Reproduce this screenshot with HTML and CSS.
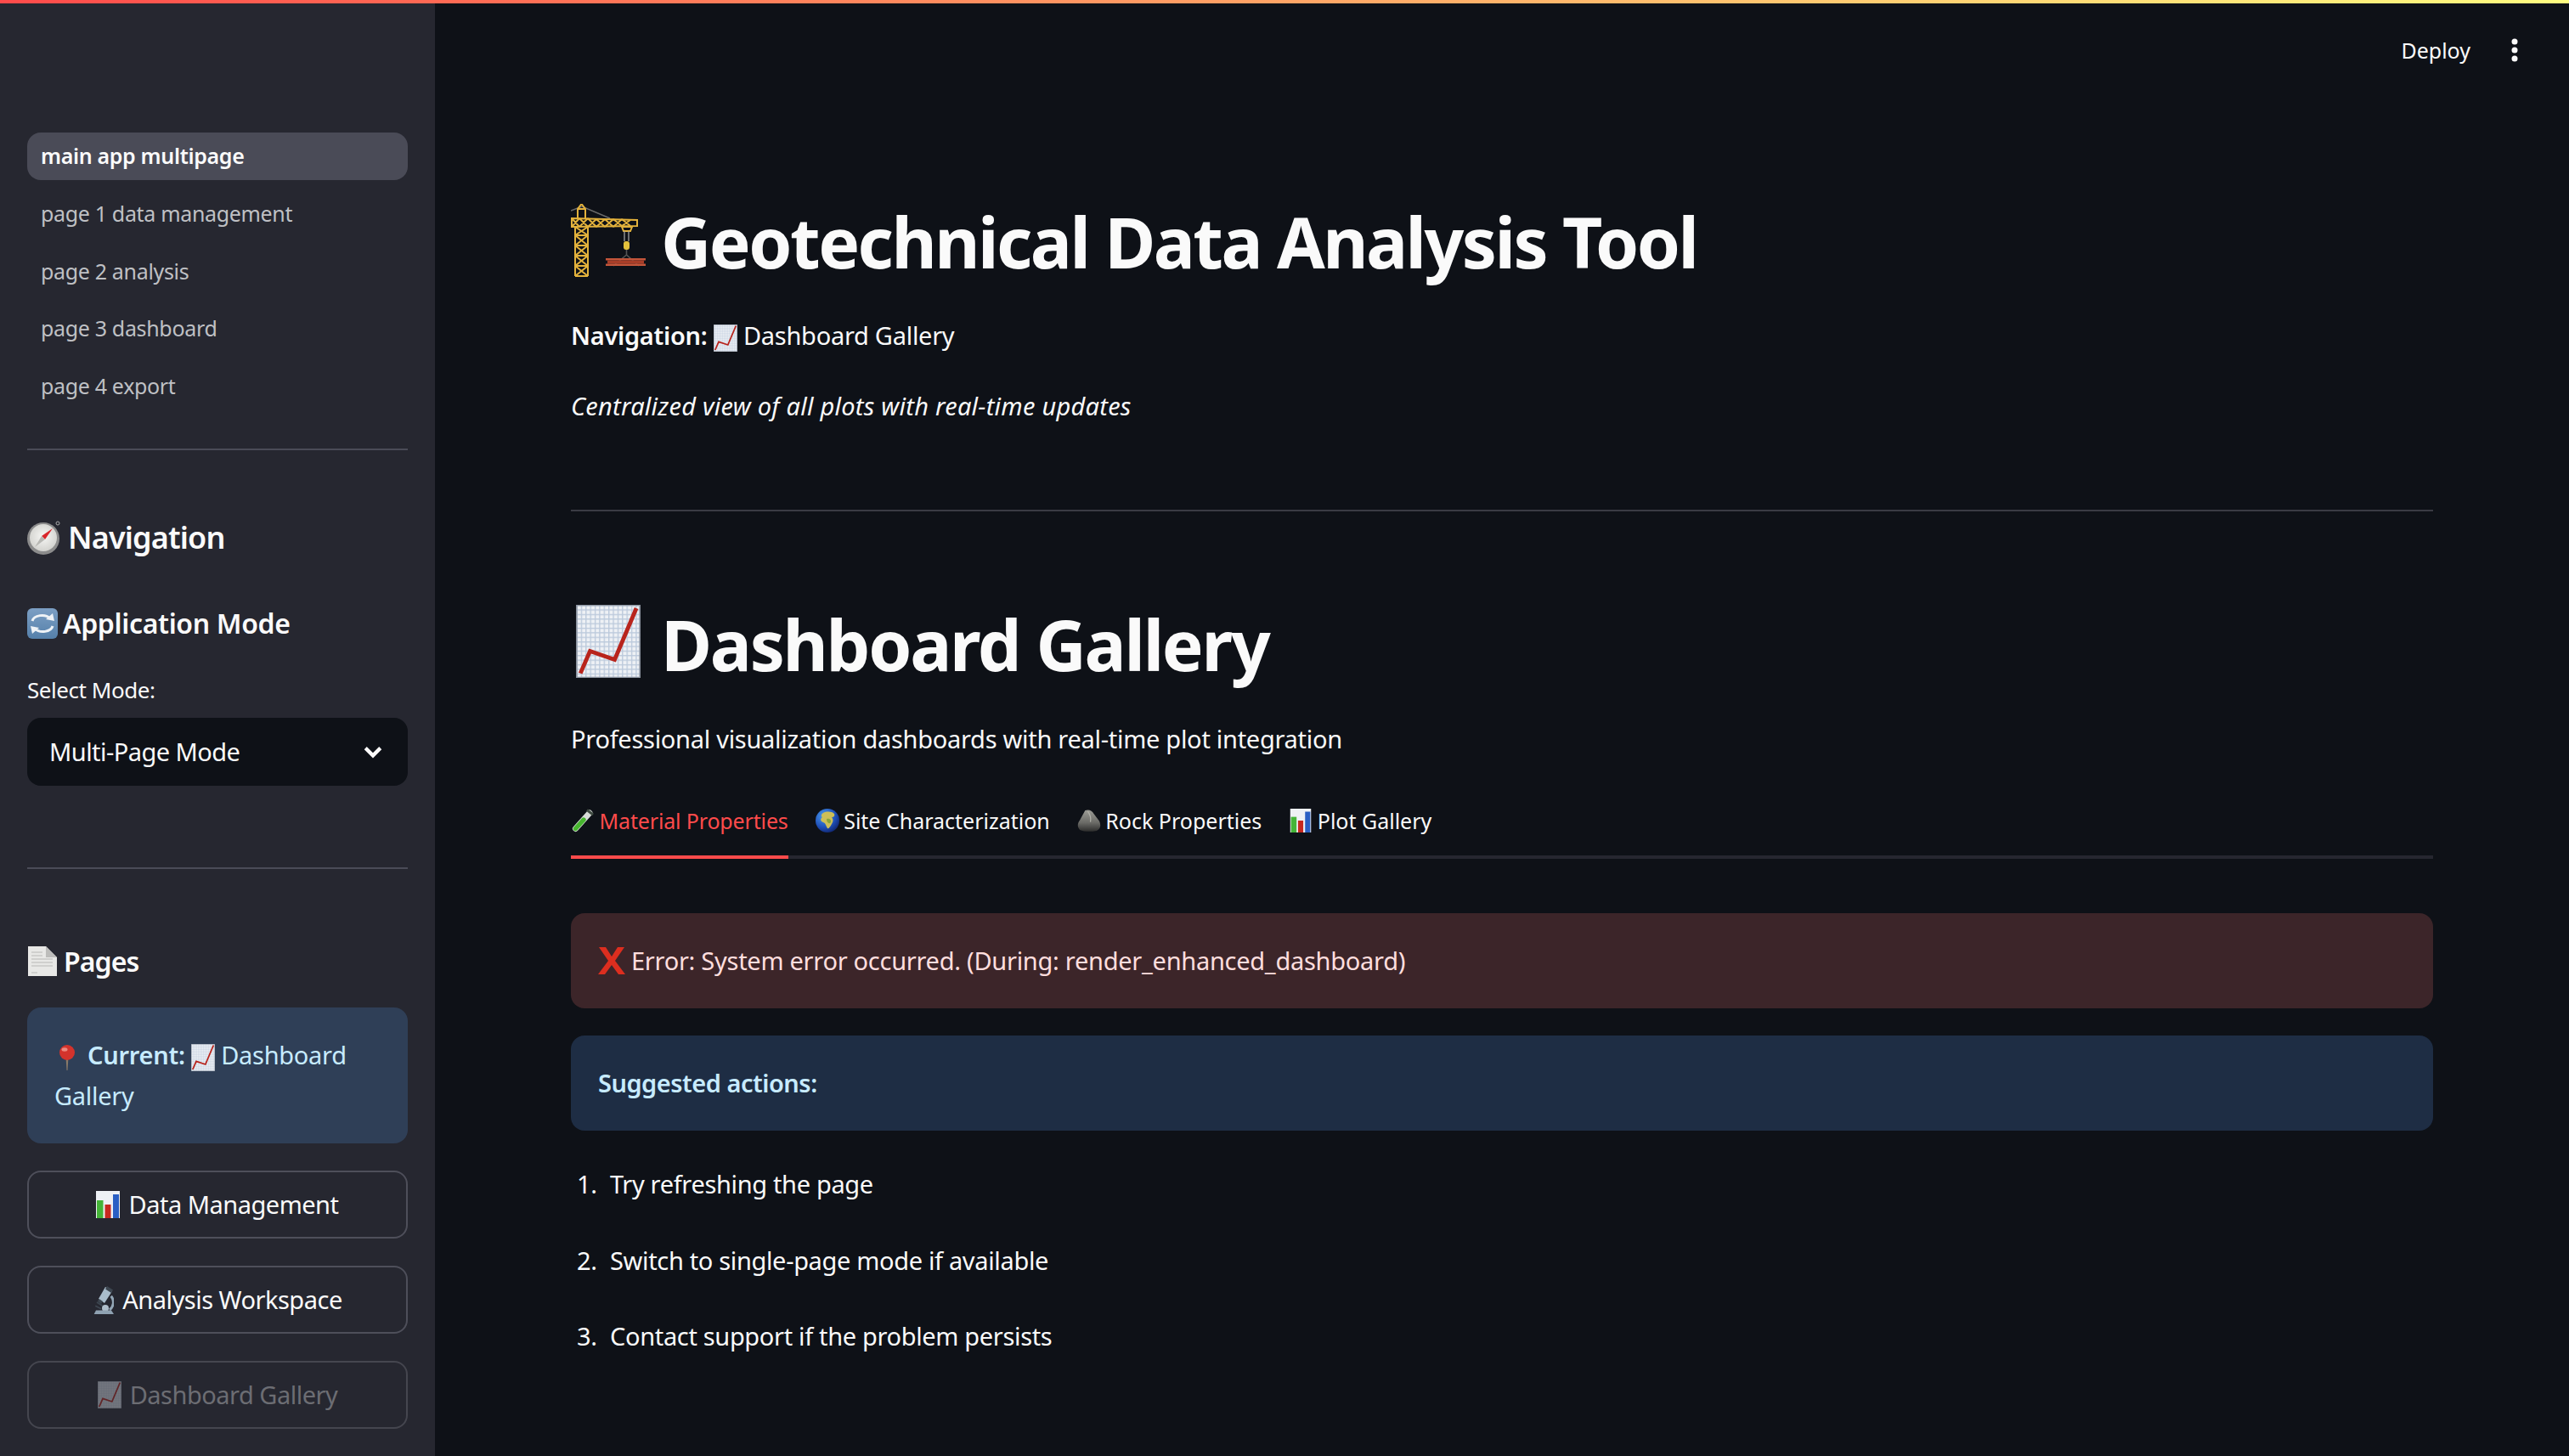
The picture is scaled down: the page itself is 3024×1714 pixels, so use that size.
FILE: index.html
```html
<!DOCTYPE html>
<html lang="en">
<head>
  <meta charset="UTF-8" />
  <meta name="viewport" content="width=device-width, initial-scale=1" />
  <title>Geotechnical Data Analysis Tool</title>
  <link rel="stylesheet" href="styles.css">
</head>
<body>

  <!-- emoji drawn once, reused below -->
  <svg class="icon-defs" aria-hidden="true">
    <defs>
      <pattern id="chartGrid" width="4" height="4" patternUnits="userSpaceOnUse">
        <rect width="4" height="4" fill="#eef1f5"/>
        <path d="M0 .5H4M.5 0V4" stroke="#bccadc" stroke-width="1"/>
      </pattern>
      <radialGradient id="globeSea" cx=".35" cy=".3" r=".8">
        <stop offset="0" stop-color="#4a9cf0"/>
        <stop offset=".6" stop-color="#1f50b8"/>
        <stop offset="1" stop-color="#0e1f66"/>
      </radialGradient>
      <linearGradient id="rockFill" x1="0" y1="0" x2="0" y2="1">
        <stop offset="0" stop-color="#9c9c96"/>
        <stop offset=".6" stop-color="#6a6a66"/>
        <stop offset="1" stop-color="#2d2d2c"/>
      </linearGradient>
      <radialGradient id="compassFace" cx=".5" cy=".45" r=".6">
        <stop offset="0" stop-color="#f7f7f5"/>
        <stop offset="1" stop-color="#cfcfcb"/>
      </radialGradient>
      <linearGradient id="arrowsBox" x1="0" y1="0" x2="0" y2="1">
        <stop offset="0" stop-color="#7c9fc4"/>
        <stop offset="1" stop-color="#5580aa"/>
      </linearGradient>
    </defs>

    <symbol id="e-chart" viewBox="0 0 56 64">
      <rect width="56" height="64" fill="url(#chartGrid)"/>
      <rect x=".5" y=".5" width="55" height="63" fill="none" stroke="#8f97a3"/>
      <path d="M3.6 60 L12 40.6 L33.6 48 L52.6 3" fill="none" stroke="#b8241c" stroke-width="3.6"/>
    </symbol>

    <symbol id="e-bars" viewBox="0 0 56 64">
      <rect width="56" height="64" fill="#eef1f5"/>
      <rect x="2" y="22" width="15" height="42" fill="#45b438"/>
      <rect x="21" y="32" width="14" height="32" fill="#c7281f"/>
      <rect x="40" y="8" width="14" height="56" fill="#2a5fc4"/>
    </symbol>

    <symbol id="e-crane" viewBox="0 0 88 86">
      <path d="M0 8 L13 3 L46 17" fill="none" stroke="#6a6a6a" stroke-width="1.6"/>
      <g fill="none" stroke="#e3b23c" stroke-width="2">
        <path d="M12.5 0 L8 6 V17 M12.5 0 L17 6 V17 M8 6 H17"/>
        <path d="M5 85 V27 M20 85 V27 M5 85 H20 M5 73 H20 M5 61 H20 M5 49 H20 M5 37 H20"/>
        <path d="M5 85 L20 73 M20 85 L5 73 M5 73 L20 61 M20 73 L5 61 M5 61 L20 49 M20 61 L5 49 M5 49 L20 37 M20 49 L5 37 M5 37 L20 27 M20 37 L5 27"/>
        <path d="M1 17 L78 19 V26 L1 27 Z"/>
        <path d="M1 17 L10 27 M10 17 L1 27 M10 17 L20 27 M20 17 L10 27 M20 17 L30 27 M30 18 L20 27 M30 18 L40 27 M40 18 L30 27 M40 18 L50 27 M50 18 L40 27 M50 18 L60 26 M60 18 L50 27 M60 18 L70 26 M70 19 L60 26"/>
        <path d="M60 27 H72 L70 32 H62 Z"/>
      </g>
      <path d="M63 32 V44 M68 32 V44" stroke="#a2a2a2" stroke-width="1.3"/>
      <rect x="62" y="44" width="7" height="10" rx="3" fill="#e3c13c"/>
      <path d="M65.5 54 V60 L50 73 M65.5 60 L80 73" fill="none" stroke="#555" stroke-width="1.6"/>
      <rect x="41" y="64" width="47" height="2.5" fill="#c4553a"/>
      <rect x="43" y="66.500" width="43" height="4" fill="#a83e28"/>
      <rect x="41" y="70.500" width="47" height="2.500" fill="#c4553a"/>
    </symbol>

    <symbol id="e-compass" viewBox="0 0 40 40">
      <circle cx="36" cy="3" r="2" fill="none" stroke="#a9a9a9" stroke-width="1"/>
      <circle cx="19" cy="21" r="19" fill="#8c8c8c"/>
      <circle cx="19" cy="20" r="16" fill="url(#compassFace)"/>
      <path d="M30 9 L17 18 L21 22 Z" fill="#d9262b"/>
      <path d="M9 31 L17 18 L21 22 Z" fill="#b8b8b4"/>
    </symbol>

    <symbol id="e-arrows" viewBox="0 0 36 36">
      <rect width="36" height="36" rx="6" fill="url(#arrowsBox)"/>
      <path d="M6 15 C8 8 21 6 27 12" fill="none" stroke="#eef2f6" stroke-width="3"/>
      <path d="M22 13 L32 15 L30 6 Z" fill="#eef2f6"/>
      <path d="M30 21 C28 28 15 30 9 24" fill="none" stroke="#eef2f6" stroke-width="3"/>
      <path d="M14 23 L4 21 L6 30 Z" fill="#eef2f6"/>
    </symbol>

    <symbol id="e-page" viewBox="0 0 36 36">
      <path d="M1 0 H22 L35 13 V35 H1 Z" fill="#e8e8e6"/>
      <path d="M22 0 L35 13 H22 Z" fill="#bdbdbb"/>
      <path d="M5 7 H18 M5 11 H18 M5 15 H30 M5 19 H30 M5 23 H30 M5 31 H12" stroke="#c8c8c6" stroke-width="1.4"/>
    </symbol>

    <symbol id="e-pin" viewBox="0 0 24 30">
      <path d="M10.500 14 L11.500 30 H12.500 L13.500 14 Z" fill="#8a7a68"/>
      <circle cx="12" cy="9" r="9" fill="#d3332c"/>
      <ellipse cx="9" cy="5.500" rx="3.500" ry="2.200" fill="#ec8a80"/>
    </symbol>

    <symbol id="e-scope" viewBox="0 0 25 33">
      <path d="M5 19 L11.700 23.300 M3.300 23.300 L10 26.700" stroke="#3d4650" stroke-width="1.800"/>
      <path d="M21.700 11.700 C26 17 25 24 20 28" fill="none" stroke="#93a6b6" stroke-width="3"/>
      <path d="M15 1 L23 6 L14 20 L7 15 Z" fill="#a9bccb"/>
      <path d="M17 0 L24 4.500 L22 8 L15 3.500 Z" fill="#3d4650"/>
      <path d="M7.500 15 L12 18 L10 21 L6 18 Z" fill="#3d4650"/>
      <circle cx="15" cy="26" r="4" fill="#aebdc9"/>
      <path d="M1.700 33 L4 28.500 H22 L25 33 Z" fill="#8fa2b2"/>
    </symbol>

    <symbol id="e-tube" viewBox="0 0 26 28">
      <path d="M4.500 23.500 L21 5" stroke="#d8dcd8" stroke-width="7" stroke-linecap="round"/>
      <path d="M4.500 23.500 L14 13" stroke="#47b52f" stroke-width="5.400" stroke-linecap="round"/>
      <path d="M18 1.500 L25 7" stroke="#3e4a40" stroke-width="3"/>
    </symbol>

    <symbol id="e-globe" viewBox="0 0 28 28">
      <circle cx="14" cy="14" r="14" fill="url(#globeSea)"/>
      <path d="M9 5 C13 3 19 3 22 6 C23 9 21 10 19 10 C21 12 21 15 19 18 C17 22 15 24 14 23 C12 20 12 17 9 16 C6 15 5 12 8 10 C6 9 7 6 9 5 Z" fill="#cdbf58"/>
      <path d="M13 12 C16 11 19 13 18 16 C16 19 13 16 13 12 Z" fill="#8aa63c"/>
    </symbol>

    <symbol id="e-rock" viewBox="0 0 27 25">
      <path d="M9 1 C13 -.5 17 1 19 5 L25 13 C27 17 27 22 22 24 C15 25.500 7 25 3 23 C0 20 0 16 3 12 Z" fill="url(#rockFill)"/>
      <path d="M12 2 C15 6 16 10 15 14" fill="none" stroke="#b0b0a8" stroke-width="1.200"/>
    </symbol>

    <symbol id="e-cross" viewBox="0 0 32 32">
      <path d="M1 0 H9 L16 11 L23 0 H31 L20 16 L32 32 H24 L16 21 L8 32 H0 L12 16 Z" fill="#dd2e1f"/>
    </symbol>
  </svg>

  <div class="top-stripe"></div>

  <div class="app">
    <aside class="sidebar">
      <nav class="page-nav">
        <a class="page-link active" href="#">main app multipage</a>
        <a class="page-link" href="#">page 1 data management</a>
        <a class="page-link" href="#">page 2 analysis</a>
        <a class="page-link" href="#">page 3 dashboard</a>
        <a class="page-link" href="#">page 4 export</a>
      </nav>
      <hr class="side-rule first-rule">

      <h2 class="side-title nav-title"><svg class="ico ico-compass"><use href="#e-compass"/></svg>Navigation</h2>
      <h3 class="side-title mode-title"><svg class="ico ico-arrows"><use href="#e-arrows"/></svg>Application Mode</h3>
      <label class="field-label">Select Mode:</label>
      <div class="select-box">
        <span>Multi-Page Mode</span>
        <svg class="chevron" viewBox="0 0 24 24"><path d="M5 8.500 L12 15.500 L19 8.500" fill="none" stroke="#fafafa" stroke-width="3.400"/></svg>
      </div>
      <hr class="side-rule second-rule">

      <h3 class="side-title pages-title"><svg class="ico ico-page"><use href="#e-page"/></svg>Pages</h3>
      <div class="current-box">
        <svg class="ico ico-pin"><use href="#e-pin"/></svg><strong>Current:</strong> <svg class="ico ico-chart-s"><use href="#e-chart"/></svg> Dashboard<br>Gallery
      </div>
      <button class="side-btn"><svg class="ico ico-chart-s"><use href="#e-bars"/></svg>Data Management</button>
      <button class="side-btn"><svg class="ico ico-scope"><use href="#e-scope"/></svg>Analysis Workspace</button>
      <button class="side-btn" disabled><svg class="ico ico-chart-s faded"><use href="#e-chart"/></svg>Dashboard Gallery</button>
    </aside>

    <main class="main">
      <header class="top-bar">
        <span class="deploy">Deploy</span>
        <svg class="kebab" viewBox="0 0 8 28"><circle cx="4" cy="4" r="3.500"/><circle cx="4" cy="14" r="3.500"/><circle cx="4" cy="24" r="3.500"/></svg>
      </header>

      <div class="content">
        <h1 class="page-title"><svg class="ico ico-crane"><use href="#e-crane"/></svg>Geotechnical Data Analysis Tool</h1>
        <p class="crumb"><strong>Navigation:</strong> <svg class="ico ico-chart-s"><use href="#e-chart"/></svg> Dashboard Gallery</p>
        <p class="tagline">Centralized view of all plots with real-time updates</p>
        <hr class="main-rule">

        <h1 class="section-title"><svg class="ico ico-chart-l"><use href="#e-chart"/></svg>Dashboard Gallery</h1>
        <p class="section-sub">Professional visualization dashboards with real-time plot integration</p>

        <div class="tabs">
          <div class="tab active"><svg class="ico ico-tab"><use href="#e-tube"/></svg>Material Properties</div>
          <div class="tab"><svg class="ico ico-tab"><use href="#e-globe"/></svg>Site Characterization</div>
          <div class="tab"><svg class="ico ico-tab"><use href="#e-rock"/></svg>Rock Properties</div>
          <div class="tab"><svg class="ico ico-tab"><use href="#e-bars"/></svg>Plot Gallery</div>
        </div>

        <div class="alert alert-error"><svg class="ico ico-cross"><use href="#e-cross"/></svg>Error: System error occurred. (During: render_enhanced_dashboard)</div>
        <div class="alert alert-info"><strong>Suggested actions:</strong></div>

        <ol class="actions">
          <li>Try refreshing the page</li>
          <li>Switch to single-page mode if available</li>
          <li>Contact support if the problem persists</li>
        </ol>
      </div>
    </main>
  </div>

</body>
</html>
```

FILE: styles.css
```css
* {
  box-sizing: border-box;
}
html, body {
  margin: 0;
  height: 100%;
  overflow: hidden;
}
body {
  font-family: "Noto Sans", sans-serif;
  font-size: 29px;
  line-height: 48px;
  letter-spacing: -.28px;
  color: #fafafa;
  background-color: #0e1117;
  display: flex;
  flex-direction: column;
}
a {
  color: inherit;
  text-decoration: none;
}
.icon-defs {
  width: 0;
  height: 0;
  overflow: hidden;
  flex: none;
}
.top-stripe {
  height: 4px;
  flex: none;
  background: linear-gradient(90deg, #ff4b4b, #fffd80);
}
.app {
  flex: 1;
  display: flex;
  min-height: 0;
}
.ico {
  display: inline-block;
  vertical-align: middle;
  flex: none;
}

/* sidebar */
.sidebar {
  width: 512px;
  flex: none;
  background-color: #262730;
  padding: 152px 32px 0;
  display: flex;
  flex-direction: column;
}
.page-nav {
  display: flex;
  flex-direction: column;
  gap: 11.8px;
}
.page-link {
  height: 56px;
  line-height: 54px;
  padding-left: 16px;
  border-radius: 16px;
  font-size: 25px;
  letter-spacing: -.33px;
  color: #bfc0c4;
}
.page-link.active {
  background-color: #4a4b57;
  color: #fafafa;
  font-weight: 600;
}
.side-rule {
  border: none;
  height: 2px;
  margin: 0;
  background-color: #4a4b57;
  flex: none;
}
.first-rule {
  margin-top: 45px;
}
.second-rule {
  margin-top: 96px;
}
.side-title {
  margin: 0;
  font-weight: 600;
  display: flex;
  align-items: center;
}
.nav-title {
  margin-top: 73px;
  font-size: 36px;
  line-height: 60px;
  letter-spacing: -.85px;
}
.mode-title {
  margin-top: 45px;
  font-size: 32px;
  line-height: 52px;
  letter-spacing: -.35px;
}
.pages-title {
  margin-top: 83px;
  font-size: 32px;
  line-height: 52px;
  letter-spacing: -.9px;
}
.ico-compass {
  width: 40px;
  height: 40px;
  margin-right: 8px;
}
.ico-arrows {
  width: 36px;
  height: 36px;
  margin-right: 6px;
}
.ico-page {
  width: 36px;
  height: 36px;
  margin-right: 7px;
}
.field-label {
  margin-top: 33px;
  font-size: 26px;
  line-height: 38px;
  letter-spacing: -.45px;
  padding-bottom: 2px;
}
.select-box {
  margin-top: 12px;
  height: 80px;
  flex: none;
  background-color: #0e1117;
  border-radius: 16px;
  padding: 0 26px;
  display: flex;
  align-items: center;
  justify-content: space-between;
  letter-spacing: -.55px;
}
.chevron {
  width: 30px;
  height: 30px;
}
.current-box {
  margin-top: 28px;
  height: 160px;
  flex: none;
  padding: 32px;
  border-radius: 16px;
  background-color: #2f3f57;
  color: #c7ebff;
}
.current-box strong {
  font-weight: 600;
}
.ico-pin {
  width: 24px;
  height: 30px;
  margin: 0 12px 0 3px;
}
.ico-chart-s {
  width: 28px;
  height: 32px;
}
.side-btn {
  margin-top: 32px;
  height: 80px;
  flex: none;
  font: inherit;
  letter-spacing: -.5px;
  color: #fafafa;
  background-color: transparent;
  border: 2px solid #4e4f5a;
  border-radius: 16px;
  display: flex;
  align-items: center;
  justify-content: center;
  gap: 10px;
}
.side-btn:disabled {
  color: #6c6d73;
  border-color: #45464f;
}
.faded {
  opacity: .4;
}
.ico-scope {
  width: 25px;
  height: 33px;
}

/* main area */
.main {
  flex: 1;
  min-width: 0;
}
.top-bar {
  height: 116px;
  display: flex;
  align-items: center;
  justify-content: flex-end;
  padding: 0 60px 7px 0;
  font-size: 25px;
  letter-spacing: 0;
}
.kebab {
  width: 8px;
  height: 28px;
  margin-left: 48px;
  fill: #fafafa;
}
.content {
  padding: 0 160px;
}
.page-title, .section-title {
  margin: 0;
  padding-bottom: 2px;
  font-size: 82px;
  line-height: 98px;
  letter-spacing: -2.5px;
  font-weight: 700;
  display: flex;
  align-items: center;
}
.page-title {
  margin-top: 115px;
}
.section-title {
  margin-top: 107px;
  letter-spacing: -2.25px;
}
.ico-crane {
  width: 88px;
  height: 86px;
  margin: 0 18px 3px 0;
}
.ico-chart-l {
  width: 76px;
  height: 86px;
  margin: 0 24px 6px 6px;
}
p {
  margin: 0;
}
.crumb {
  margin-top: 36px;
}
.crumb strong {
  font-weight: 600;
}
.tagline {
  margin-top: 35px;
  font-style: italic;
  letter-spacing: .25px;
}
.main-rule {
  border: none;
  height: 2px;
  margin: 98px 0 0;
  background-color: #3a3b44;
}
.section-sub {
  margin-top: 37px;
}
.tabs {
  margin-top: 52px;
  display: flex;
  gap: 32px;
  border-bottom: 4px solid #262730;
  font-size: 25px;
  line-height: 40px;
  letter-spacing: 0;
}
.tab {
  padding-bottom: 21px;
  margin-bottom: -4px;
  border-bottom: 4px solid transparent;
  display: flex;
  align-items: center;
  gap: 5.5px;
}
.tab.active {
  color: #ff4b4b;
  border-bottom-color: #ff4b4b;
  letter-spacing: -.15px;
}
.ico-tab {
  width: 28px;
  height: 28px;
}
.alert {
  height: 112px;
  padding: 0 32px;
  border-radius: 16px;
  display: flex;
  align-items: center;
}
.alert-error {
  margin-top: 64px;
  background-color: #3c2529;
  color: #ffdede;
}
.alert-info {
  margin-top: 32px;
  background-color: #1e2d44;
  color: #c7ebff;
}
.alert-info strong {
  font-weight: 600;
  letter-spacing: -.5px;
}
.ico-cross {
  width: 32px;
  height: 32px;
  margin-right: 7px;
}
.actions {
  margin: 39px 0 0;
  padding: 0 0 0 38px;
  list-style: decimal;
  letter-spacing: -.34px;
}
.actions li {
  padding-left: 8px;
  margin-bottom: 41.7px;
}
```
